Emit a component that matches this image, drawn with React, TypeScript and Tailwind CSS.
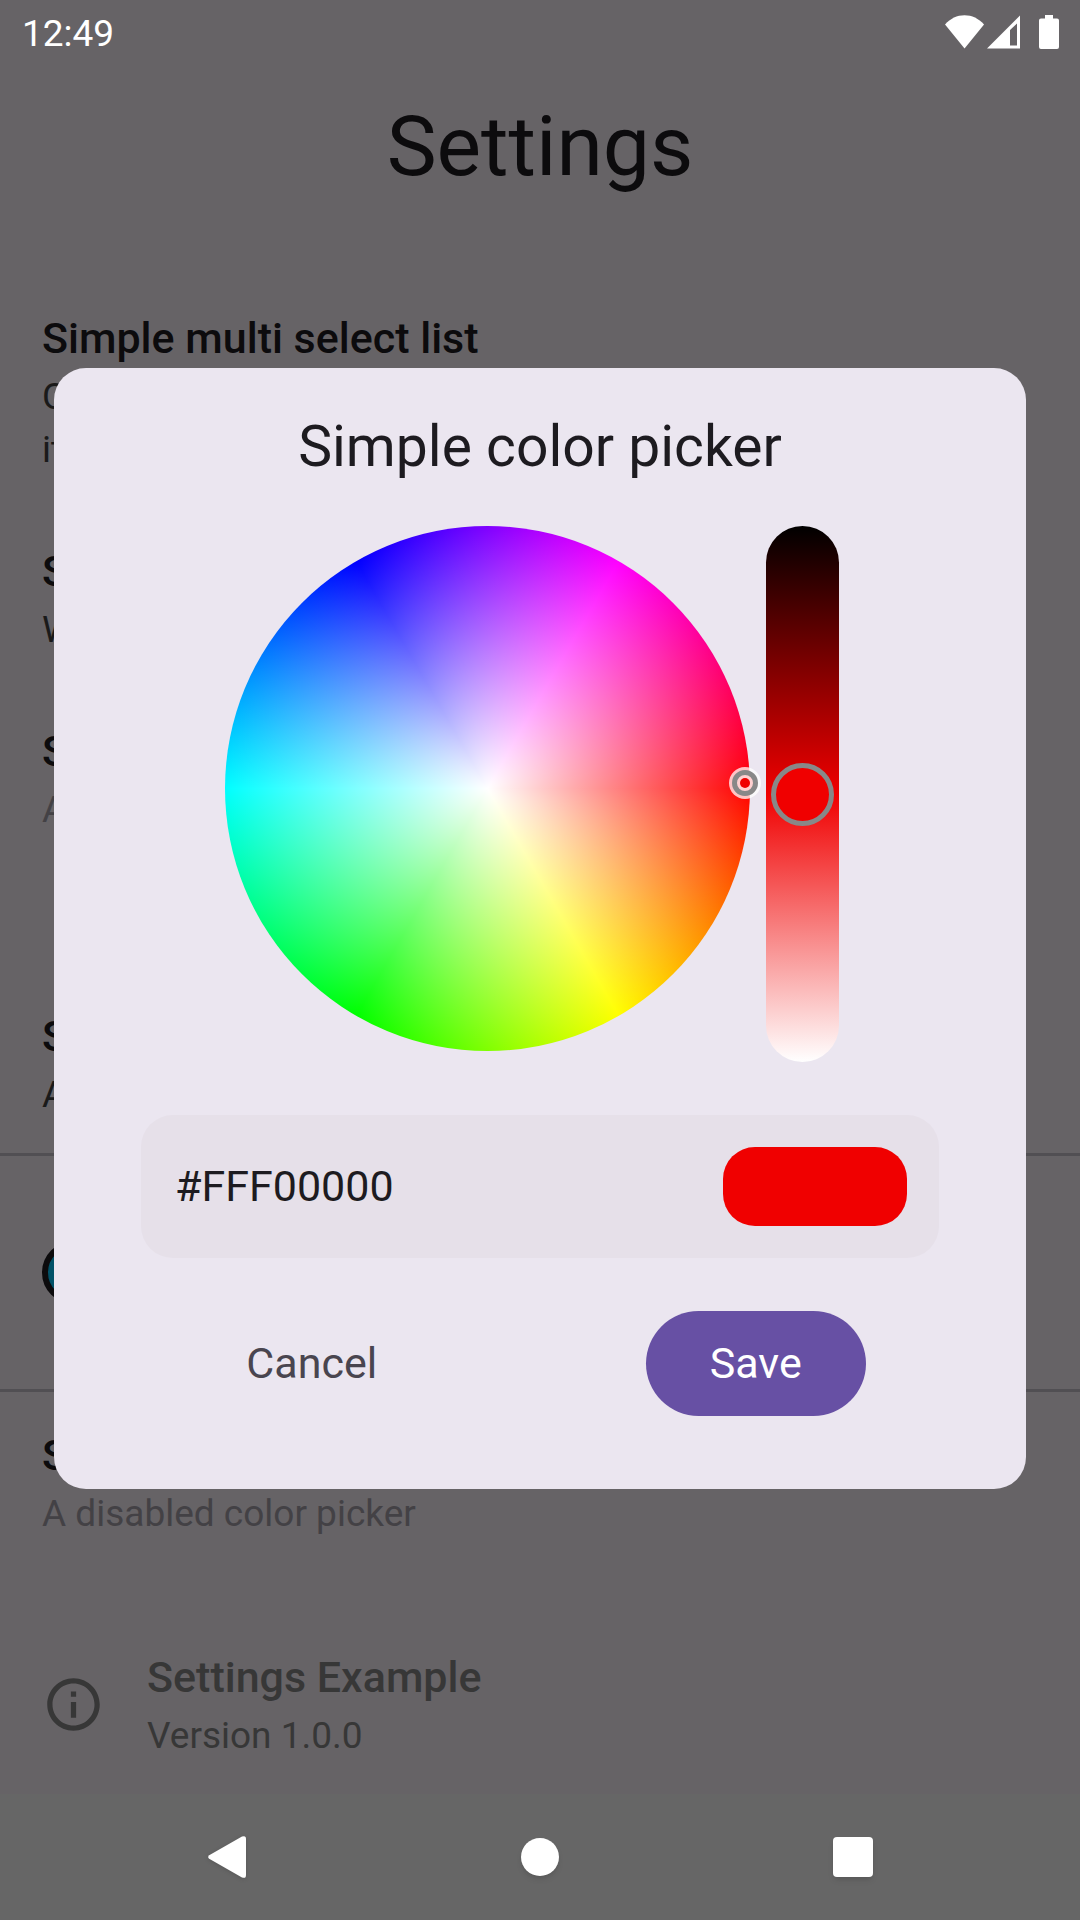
import type { ReactNode } from "react";

function StatusBar() {
  return (
    <header className="flex h-[63px] items-center justify-between pl-[22px] pr-[21px] text-white">
      <time className="pt-1 text-[37px] leading-[43px]">12:49</time>
      <div className="flex items-center">
        <svg width="39" height="34" viewBox="0 0 39 34" fill="currentColor" aria-hidden="true">
          <path d="M0 9.500C5.500 3.500 12 .3 19.500 .3S33.500 3.500 39 9.500L19.500 33.500Z" />
        </svg>
        <svg className="ml-[3px]" width="33" height="34" viewBox="0 0 33 34" fill="currentColor" aria-hidden="true">
          <path fillRule="evenodd" d="M33 .5V33.500H0ZM30 8.500L23 15V30.500H30Z" />
        </svg>
        <svg className="ml-[19px]" width="20" height="34" viewBox="0 0 20 34" fill="currentColor" aria-hidden="true">
          <path d="M6 0h8v3.500h4a2 2 0 0 1 2 2V32a2 2 0 0 1-2 2H2a2 2 0 0 1-2-2V5.500a2 2 0 0 1 2-2h4Z" />
        </svg>
      </div>
    </header>
  );
}

type ItemProps = { title: string; children: ReactNode; disabled?: boolean };

function SettingItem({ title, children, disabled }: ItemProps) {
  return (
    <div className="px-[42px] py-8">
      <h2 className="text-[43px] leading-[63px] font-medium text-[#0c0b0d]">{title}</h2>
      <p className={disabled ? "text-[37px] leading-[53px] text-[#434145]" : "text-[37px] leading-[53px] text-[#1a1a1a]"}>
        {children}
      </p>
    </div>
  );
}

function ColorWheel() {
  return (
    <div className="relative size-[525px] rounded-full bg-[radial-gradient(circle_closest-side,#ffffff,rgba(255,255,255,0)),conic-gradient(from_90deg,#ff0000,#ffff00,#00ff00,#00ffff,#0000ff,#ff00ff,#ff0000)]">
      <div className="absolute top-[241px] left-[504px] size-8 rounded-full bg-white/75 p-[3px]">
        <div className="size-full rounded-full border-[5px] border-[#888888] bg-[#ffd0d0] p-[3px]">
          <div className="size-full rounded-full bg-[#f00000]" />
        </div>
      </div>
    </div>
  );
}

function ColorDialog() {
  return (
    <section
      role="dialog"
      aria-labelledby="dialog-title"
      className="w-full rounded-[32px] bg-[#ebe6f0] pt-[42px] pb-[73px]"
    >
      <h2 id="dialog-title" className="text-center text-[57px] leading-[74px] text-[#1d1b20]">
        Simple color picker
      </h2>
      <div className="mt-[42px] flex justify-center gap-4 pr-4">
        <ColorWheel />
        <input
          type="range"
          aria-label="Brightness"
          min={0}
          max={100}
          defaultValue={50}
          className="m-0 h-[536px] w-[73px] appearance-none rounded-full bg-[linear-gradient(to_bottom,#000000,#f00000,#ffffff)] [writing-mode:vertical-lr] [&::-webkit-slider-thumb]:size-[63px] [&::-webkit-slider-thumb]:appearance-none [&::-webkit-slider-thumb]:rounded-full [&::-webkit-slider-thumb]:border-[5px] [&::-webkit-slider-thumb]:border-[#888888] [&::-webkit-slider-thumb]:bg-[#f00000]"
        />
      </div>
      <div className="mx-[87px] mt-[53px] flex h-[143px] items-center justify-between rounded-[32px] bg-[#e6e0e9] pr-8 pl-[34px]">
        <input
          type="text"
          aria-label="Color value"
          defaultValue="#FFF00000"
          className="min-w-0 flex-1 bg-transparent text-[43px] leading-[63px] text-[#1d1b20] outline-none"
        />
        <div className="h-[79px] w-[184px] rounded-[32px] bg-[#f00000]" />
      </div>
      <div className="mt-[53px] flex justify-around px-[42px] text-[43px] leading-[63px]">
        <button type="button" className="h-[105px] rounded-full px-8 text-[#49454f]">
          Cancel
        </button>
        <button type="button" className="h-[105px] rounded-full bg-[#6750a4] px-16 text-white">
          Save
        </button>
      </div>
    </section>
  );
}

function NavBar() {
  return (
    <nav className="grid h-[126px] grid-cols-3 items-center bg-[#666666] px-[70px] text-white">
      <button type="button" aria-label="Back" className="justify-self-center drop-shadow-sm">
        <svg width="38" height="42" viewBox="0 0 38 42" fill="currentColor" aria-hidden="true">
          <path d="M1.200 19.200L34 .6Q38-1 38 3V39Q38 43 34 41.400L1.200 22.800Q-.8 21 1.200 19.200Z" />
        </svg>
      </button>
      <button type="button" aria-label="Home" className="size-[38px] justify-self-center rounded-full bg-white shadow-md" />
      <button type="button" aria-label="Recent apps" className="size-10 justify-self-center rounded-[4px] bg-white shadow-md" />
    </nav>
  );
}

export default function App() {
  return (
    <div className="flex min-h-screen flex-col bg-[#666366] font-['Roboto',sans-serif]">
      <StatusBar />
      <main className="relative flex-1">
        <h1 className="pt-[31px] pb-[76px] text-center text-[84px] leading-[105px] text-[#0c0b0d]">Settings</h1>
        <SettingItem title="Simple multi select list">
          Choose several
          <br />
          items
        </SettingItem>
        <SettingItem title="Simple">With</SettingItem>
        <div className="pb-[105px]">
          <SettingItem title="Simple" disabled>
            A
          </SettingItem>
        </div>
        <SettingItem title="Simple">A</SettingItem>
        <div className="flex h-[239px] items-center border-y-[3px] border-[#514f53] px-[42px]">
          <div className="size-[63px] rounded-full border-[6px] border-[#0c0b0d] bg-[#015268]" />
        </div>
        <SettingItem title="Simple" disabled>
          A disabled color picker
        </SettingItem>
        <div className="mt-[42px] flex items-center gap-[42px] px-[42px] py-8 text-[#373737]">
          <svg width="63" height="63" viewBox="0 0 24 24" fill="currentColor" aria-hidden="true">
            <path d="M11 7h2v2h-2zm0 4h2v6h-2zm1-9C6.480 2 2 6.480 2 12s4.480 10 10 10 10-4.480 10-10S17.520 2 12 2zm0 18c-4.410 0-8-3.590-8-8s3.590-8 8-8 8 3.590 8 8-3.590 8-8 8z" />
          </svg>
          <div>
            <h2 className="text-[43px] leading-[63px] font-medium">Settings Example</h2>
            <p className="text-[37px] leading-[53px]">Version 1.0.0</p>
          </div>
        </div>
        <div className="absolute inset-0 flex items-center px-[54px]">
          <ColorDialog />
        </div>
      </main>
      <NavBar />
    </div>
  );
}
